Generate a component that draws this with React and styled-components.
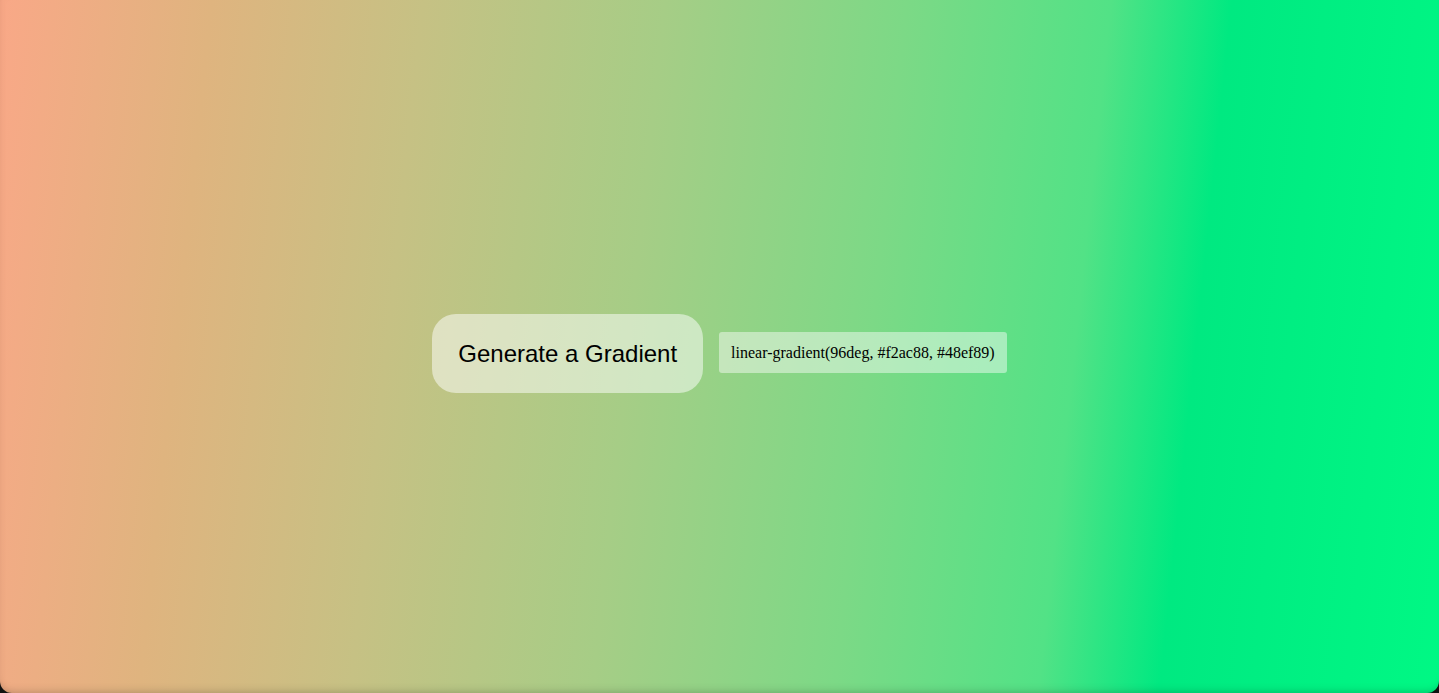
import React from 'react';
import styled, { createGlobalStyle } from 'styled-components';

const GlobalStyle = createGlobalStyle`
  html, body {
    margin: 0;
    padding: 0;
    background: #111111;
  }
  #root {
    min-height: 100vh;
  }
`;

const Page = styled.div`
  height: 100vh;
  box-sizing: border-box;
  padding-top: 14px;
  display: flex;
  align-items: center;
  justify-content: center;
  gap: 16px;
  border-radius: 0 0 12px 12px;
  background: linear-gradient(
    96deg,
    #f9a887 0%,
    #dfb47f 14%,
    #c6c184 28%,
    #a6cd86 44%,
    #7cd986 60%,
    #52e286 73.5%,
    #00e981 81.5%,
    #00f884 100%
  );
  box-shadow: inset 0 -8px 10px -8px rgba(0, 0, 0, 0.25),
    inset 6px 0 8px -6px rgba(0, 0, 0, 0.06);
`;

const GenerateButton = styled.button`
  border: none;
  outline: none;
  cursor: pointer;
  height: 79px;
  padding: 0 26px;
  border-radius: 24px;
  background: rgba(255, 255, 255, 0.5);
  font-family: 'Liberation Sans', Arial, sans-serif;
  font-size: 24px;
  color: #000000;
`;

const CodeChip = styled.div`
  height: 41px;
  box-sizing: border-box;
  padding: 0 12px;
  display: flex;
  align-items: center;
  border-radius: 3px;
  background: rgba(255, 255, 255, 0.45);
  font-family: 'Liberation Serif', 'Times New Roman', serif;
  font-size: 16px;
  color: #000000;
  margin-top: -2px;
`;

export default function App() {
  const angle = 96;
  const from = '#f2ac88';
  const to = '#48ef89';
  return (
    <>
      <GlobalStyle />
      <Page>
        <GenerateButton>Generate a Gradient</GenerateButton>
        <CodeChip>{`linear-gradient(${angle}deg, ${from}, ${to})`}</CodeChip>
      </Page>
    </>
  );
}
